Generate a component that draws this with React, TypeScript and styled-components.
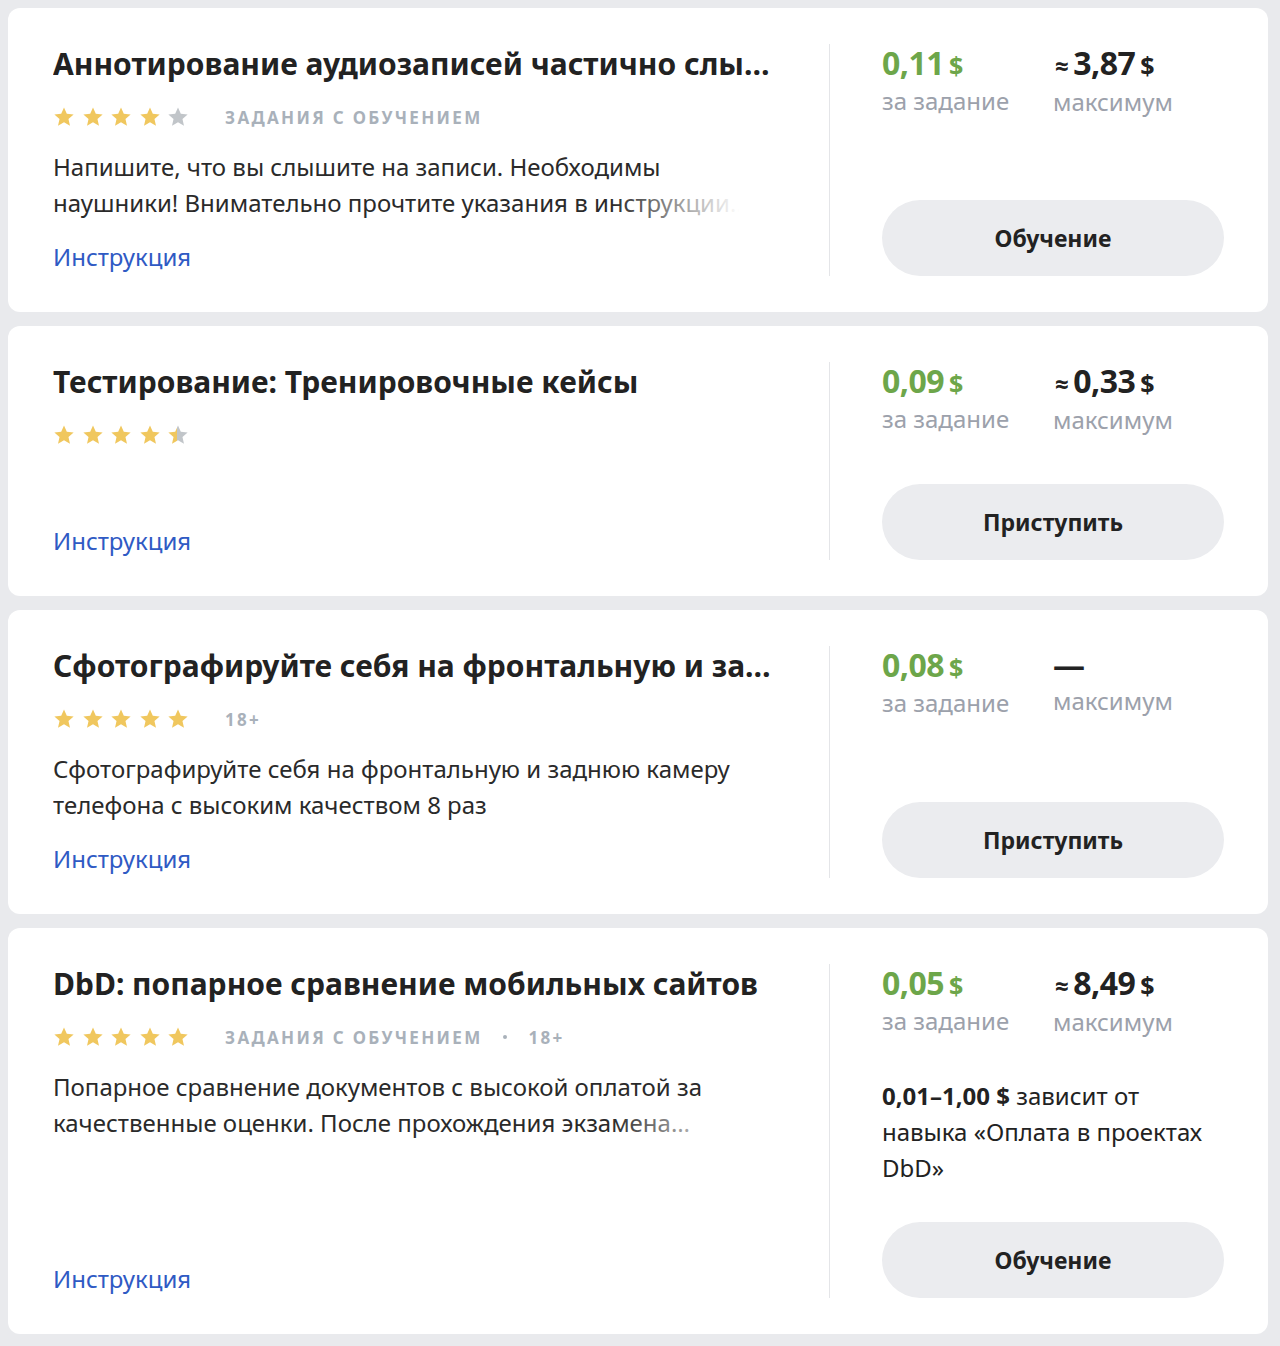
import styled, { createGlobalStyle } from "styled-components";

const GlobalStyle = createGlobalStyle`
  html, body {
    margin: 0;
    padding: 0;
    background: #e9eaed;
  }
  body {
    font-family: "Noto Sans", "Open Sans", Arial, sans-serif;
    color: #222;
  }
`;

interface Task {
  title: string;
  rating: number;
  tags: string[];
  description?: string;
  price: string;
  max?: string;
  range?: string;
  rangeNote?: string;
  action: string;
}

const tasks: Task[] = [
  {
    title: "Аннотирование аудиозаписей частично слышимой речи на английском языке",
    rating: 4,
    tags: ["задания с обучением"],
    description:
      "Напишите, что вы слышите на записи. Необходимы наушники! Внимательно прочтите указания в инструкции перед началом работы",
    price: "0,11",
    max: "3,87",
    action: "Обучение",
  },
  {
    title: "Тестирование: Тренировочные кейсы",
    rating: 4.45,
    tags: [],
    price: "0,09",
    max: "0,33",
    action: "Приступить",
  },
  {
    title: "Сфотографируйте себя на фронтальную и заднюю камеру телефона",
    rating: 5,
    tags: ["18+"],
    description:
      "Сфотографируйте себя на фронтальную и заднюю камеру телефона с высоким качеством 8 раз",
    price: "0,08",
    action: "Приступить",
  },
  {
    title: "DbD: попарное сравнение мобильных сайтов",
    rating: 5,
    tags: ["задания с обучением", "18+"],
    description:
      "Попарное сравнение документов с высокой оплатой за качественные оценки. После прохождения экзамена открывается доступ к основным заданиям",
    price: "0,05",
    max: "8,49",
    range: "0,01–1,00 $",
    rangeNote: " зависит от навыка «Оплата в проектах DbD»",
    action: "Обучение",
  },
];

const Page = styled.div`
  display: flex;
  flex-direction: column;
  gap: 14px;
  padding: 8px 12px 14px 8px;
`;

const Card = styled.div`
  display: flex;
  min-height: 198px;
  background: #fff;
  border-radius: 12px;
  padding: 36px 44px 36px 45px;
`;

const Main = styled.div`
  flex: 1;
  min-width: 0;
  display: flex;
  flex-direction: column;
  padding-right: 47px;
`;

const Title = styled.h2`
  margin: 0;
  font-size: 30px;
  line-height: 40px;
  font-weight: 700;
  color: #222;
  white-space: nowrap;
  overflow: hidden;
  text-overflow: ellipsis;
`;

const Meta = styled.div`
  display: flex;
  align-items: center;
  height: 26px;
  margin-top: 20px;
`;

const Stars = styled.div`
  display: flex;
  gap: 6.5px;
  margin-right: 36px;
`;

const Tag = styled.span`
  font-size: 17px;
  font-weight: 700;
  letter-spacing: 2.3px;
  text-transform: uppercase;
  color: #a9b1ba;
`;

const Dot = styled.span`
  width: 4px;
  height: 4px;
  border-radius: 50%;
  background: #a9b1ba;
  margin: 0 22px 0 20px;
`;

const Description = styled.p`
  position: relative;
  margin: 19px 0 0;
  font-size: 24px;
  line-height: 36px;
  color: #2a2a2a;
  display: -webkit-box;
  -webkit-line-clamp: 2;
  -webkit-box-orient: vertical;
  overflow: hidden;

  &::after {
    content: "";
    position: absolute;
    right: 0;
    bottom: 0;
    width: 170px;
    height: 36px;
    background: linear-gradient(to right, rgba(255, 255, 255, 0), #fff 75%);
  }
`;

const Link = styled.a`
  margin-top: auto;
  padding-top: 17px;
  font-size: 24px;
  line-height: 38px;
  color: #2f5ac4;
  text-decoration: none;
`;

const Divider = styled.div`
  width: 1px;
  background: #e4e5e8;
  margin-right: 52px;
`;

const Side = styled.div`
  width: 342px;
  flex-shrink: 0;
  display: flex;
  flex-direction: column;
`;

const Prices = styled.div`
  display: grid;
  grid-template-columns: 1fr 1fr;
`;

const PriceBox = styled.div`
  display: flex;
  flex-direction: column;
`;

const Amount = styled.div<{ $accent?: boolean }>`
  font-size: 32px;
  line-height: 38px;
  font-weight: 700;
  letter-spacing: -0.5px;
  color: ${(p) => (p.$accent ? "#6da64a" : "#222")};
`;

const Small = styled.span`
  font-size: 25px;
  margin-left: 5px;
`;

const Approx = styled.span`
  font-size: 24px;
  margin: 0 5px 0 2px;
`;

const Caption = styled.div`
  font-size: 24px;
  line-height: 34px;
  color: #9ca1ab;
`;

const Range = styled.p`
  margin: 39px 0 0;
  font-size: 24px;
  line-height: 36px;
  color: #222;

  b {
    font-weight: 700;
  }
`;

const Button = styled.button`
  margin-top: auto;
  height: 76px;
  border: 0;
  border-radius: 38px;
  background: #ebecef;
  font-family: inherit;
  font-size: 23px;
  font-weight: 700;
  color: #222;
  cursor: pointer;
`;

const Spacer = styled.div`
  min-height: 36px;
  flex: 1;
`;

const STAR =
  "M12 1.6l3.06 6.9 7.44.72-5.62 4.98 1.64 7.36L12 17.74 5.48 21.56l1.64-7.36L1.5 9.22l7.44-.72z";

const Star = ({ fill, id }: { fill: number; id: string }) => (
  <svg width="22" height="22" viewBox="0 0 24 24">
    <defs>
      <linearGradient id={id} x1="0" x2="1" y1="0" y2="0">
        <stop offset={fill} stopColor="#f0c75e" />
        <stop offset={fill} stopColor="#c1c5c9" />
      </linearGradient>
    </defs>
    <path d={STAR} fill={`url(#${id})`} />
  </svg>
);

const Rating = ({ value, id }: { value: number; id: number }) => (
  <Stars>
    {[0, 1, 2, 3, 4].map((i) => (
      <Star
        key={i}
        id={`star-${id}-${i}`}
        fill={Math.max(0, Math.min(1, value - i))}
      />
    ))}
  </Stars>
);

const TaskCard = ({ task, index }: { task: Task; index: number }) => (
  <Card>
    <Main>
      <Title>{task.title}</Title>
      <Meta>
        <Rating value={task.rating} id={index} />
        {task.tags.map((t, i) => (
          <span key={t} style={{ display: "contents" }}>
            {i > 0 && <Dot />}
            <Tag>{t}</Tag>
          </span>
        ))}
      </Meta>
      {task.description && <Description>{task.description}</Description>}
      <Link href="#">Инструкция</Link>
    </Main>
    <Divider />
    <Side>
      <Prices>
        <PriceBox>
          <Amount $accent>
            {task.price}
            <Small>$</Small>
          </Amount>
          <Caption>за задание</Caption>
        </PriceBox>
        <PriceBox>
          <Amount>
            {task.max ? (
              <>
                <Approx>≈</Approx>
                {task.max}
                <Small>$</Small>
              </>
            ) : (
              "—"
            )}
          </Amount>
          <Caption>максимум</Caption>
        </PriceBox>
      </Prices>
      {task.range && (
        <Range>
          <b>{task.range}</b>
          {task.rangeNote}
        </Range>
      )}
      <Spacer />
      <Button>{task.action}</Button>
    </Side>
  </Card>
);

export default function App() {
  return (
    <>
      <GlobalStyle />
      <Page>
        {tasks.map((t, i) => (
          <TaskCard key={i} task={t} index={i} />
        ))}
      </Page>
    </>
  );
}
